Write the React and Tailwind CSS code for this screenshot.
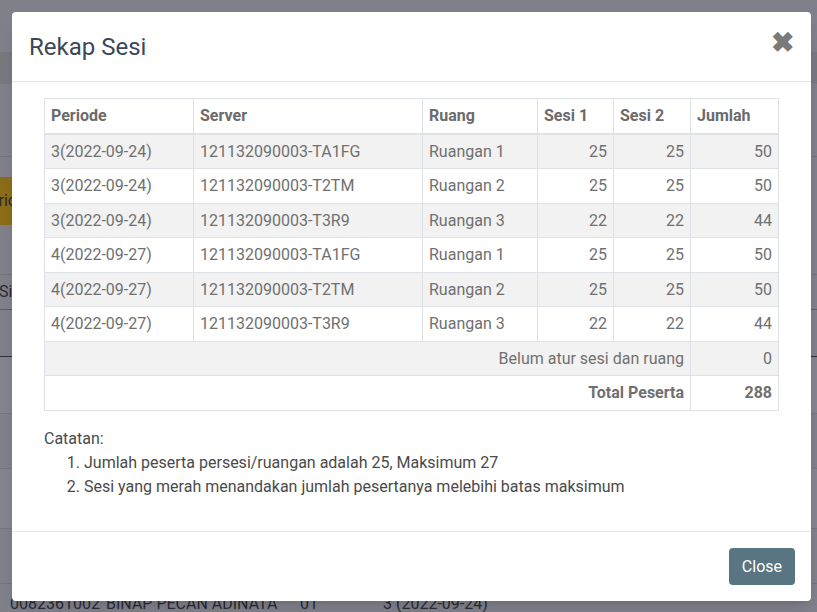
import React from "react";

const rows = [
  ["3(2022-09-24)", "121132090003-TA1FG", "Ruangan 1", 25, 25, 50],
  ["3(2022-09-24)", "121132090003-T2TM", "Ruangan 2", 25, 25, 50],
  ["3(2022-09-24)", "121132090003-T3R9", "Ruangan 3", 22, 22, 44],
  ["4(2022-09-27)", "121132090003-TA1FG", "Ruangan 1", 25, 25, 50],
  ["4(2022-09-27)", "121132090003-T2TM", "Ruangan 2", 25, 25, 50],
  ["4(2022-09-27)", "121132090003-T3R9", "Ruangan 3", 22, 22, 44],
];

const cell = "border border-[#dee2e6] px-[6px] py-[5px] leading-[23.5px]";

const BackgroundPage = () => (
  <div className="h-[612px] w-full overflow-hidden bg-[#80808b] text-[#2a2a30]">
    <div className="h-[52px]" />
    <div className="h-[32px] bg-[#78787f]" />
    <div className="h-[73px] border-b border-[#74747c]" />
    <div className="h-[20px]" />
    <div className="flex h-[48px] w-[120px] items-center bg-[#8c6c16] text-[16px]">
      <span className="-ml-[20px]">Periode</span>
    </div>
    <div className="h-[50px] border-b border-[#74747c]" />
    <div className="flex h-[35px] items-center border-b border-[#5c5c62] text-[16px]">
      <span className="-ml-[1px]">Simpan</span>
    </div>
    <div className="h-[47px] border-b border-[#2f2f35]" />
    <div className="h-[57px] border-b border-[#74747c] bg-[#84848f]" />
    <div className="h-[55px] border-b border-[#74747c]" />
    <div className="h-[60px] border-b border-[#74747c] bg-[#84848f]" />
    <div className="h-[55px] border-b border-[#74747c]" />
    <div className="flex h-[30px] items-end pl-[10px] text-[16px] leading-[20px]">
      <span className="w-[96px]">0082361002</span>
      <span className="w-[194px]">BINAP PECAN ADINATA</span>
      <span className="w-[83px]">01</span>
      <span>3 (2022-09-24)</span>
    </div>
  </div>
);

export default function App() {
  return (
    <div
      className="relative h-[612px] w-[817px] overflow-hidden"
      style={{ fontFamily: "Roboto, 'Liberation Sans', sans-serif" }}
    >
      <BackgroundPage />

      {/* Modal */}
      <div className="absolute left-[12px] top-[12px] flex h-[589px] w-[799px] flex-col rounded-[4px] bg-white shadow-lg">
        {/* Header */}
        <div className="flex h-[70px] shrink-0 items-center justify-between border-b border-[#e3e6ea] pl-[17px] pr-[17px]">
          <h4 className="text-[24px] font-normal text-[#3b4856]">Rekap Sesi</h4>
          <button className="-mt-[8px] text-[28px] font-bold leading-none text-[#7a7a7a]">
            ✖
          </button>
        </div>

        {/* Body */}
        <div className="flex-1 px-[32px] pt-[16px] text-[16px] leading-[24px] text-[#707070]">
          <table className="w-full border-collapse">
            <thead>
              <tr className="font-bold text-[#6b6b6b]">
                <th className={`${cell} w-[149px] border-b-2 text-left`}>Periode</th>
                <th className={`${cell} w-[229px] border-b-2 text-left`}>Server</th>
                <th className={`${cell} w-[115px] border-b-2 text-left`}>Ruang</th>
                <th className={`${cell} w-[76px] border-b-2 text-left`}>Sesi 1</th>
                <th className={`${cell} w-[77px] border-b-2 text-left`}>Sesi 2</th>
                <th className={`${cell} border-b-2 text-left`}>Jumlah</th>
              </tr>
            </thead>
            <tbody>
              {rows.map((r, i) => (
                <tr key={i} className={i % 2 === 0 ? "bg-[#f2f2f2]" : "bg-white"}>
                  <td className={cell}>{r[0]}</td>
                  <td className={cell}>{r[1]}</td>
                  <td className={cell}>{r[2]}</td>
                  <td className={`${cell} text-right`}>{r[3]}</td>
                  <td className={`${cell} text-right`}>{r[4]}</td>
                  <td className={`${cell} text-right`}>{r[5]}</td>
                </tr>
              ))}
              <tr className="bg-[#f2f2f2]">
                <td colSpan={5} className={`${cell} text-right`}>
                  Belum atur sesi dan ruang
                </td>
                <td className={`${cell} text-right`}>0</td>
              </tr>
              <tr className="bg-white font-bold">
                <td colSpan={5} className={`${cell} text-right`}>
                  Total Peserta
                </td>
                <td className={`${cell} text-right`}>288</td>
              </tr>
            </tbody>
          </table>

          <div className="mt-[16px] text-[#4a4a4a]">
            <p>Catatan:</p>
            <ol className="list-decimal pl-[40px]">
              <li>Jumlah peserta persesi/ruangan adalah 25, Maksimum 27</li>
              <li>Sesi yang merah menandakan jumlah pesertanya melebihi batas maksimum</li>
            </ol>
          </div>
        </div>

        {/* Footer */}
        <div className="flex h-[70px] shrink-0 items-center justify-end border-t border-[#e3e6ea] px-[16px]">
          <button className="h-[37px] rounded-[4px] bg-[#5a7582] px-[13px] text-[16px] text-white">
            Close
          </button>
        </div>
      </div>
    </div>
  );
}
